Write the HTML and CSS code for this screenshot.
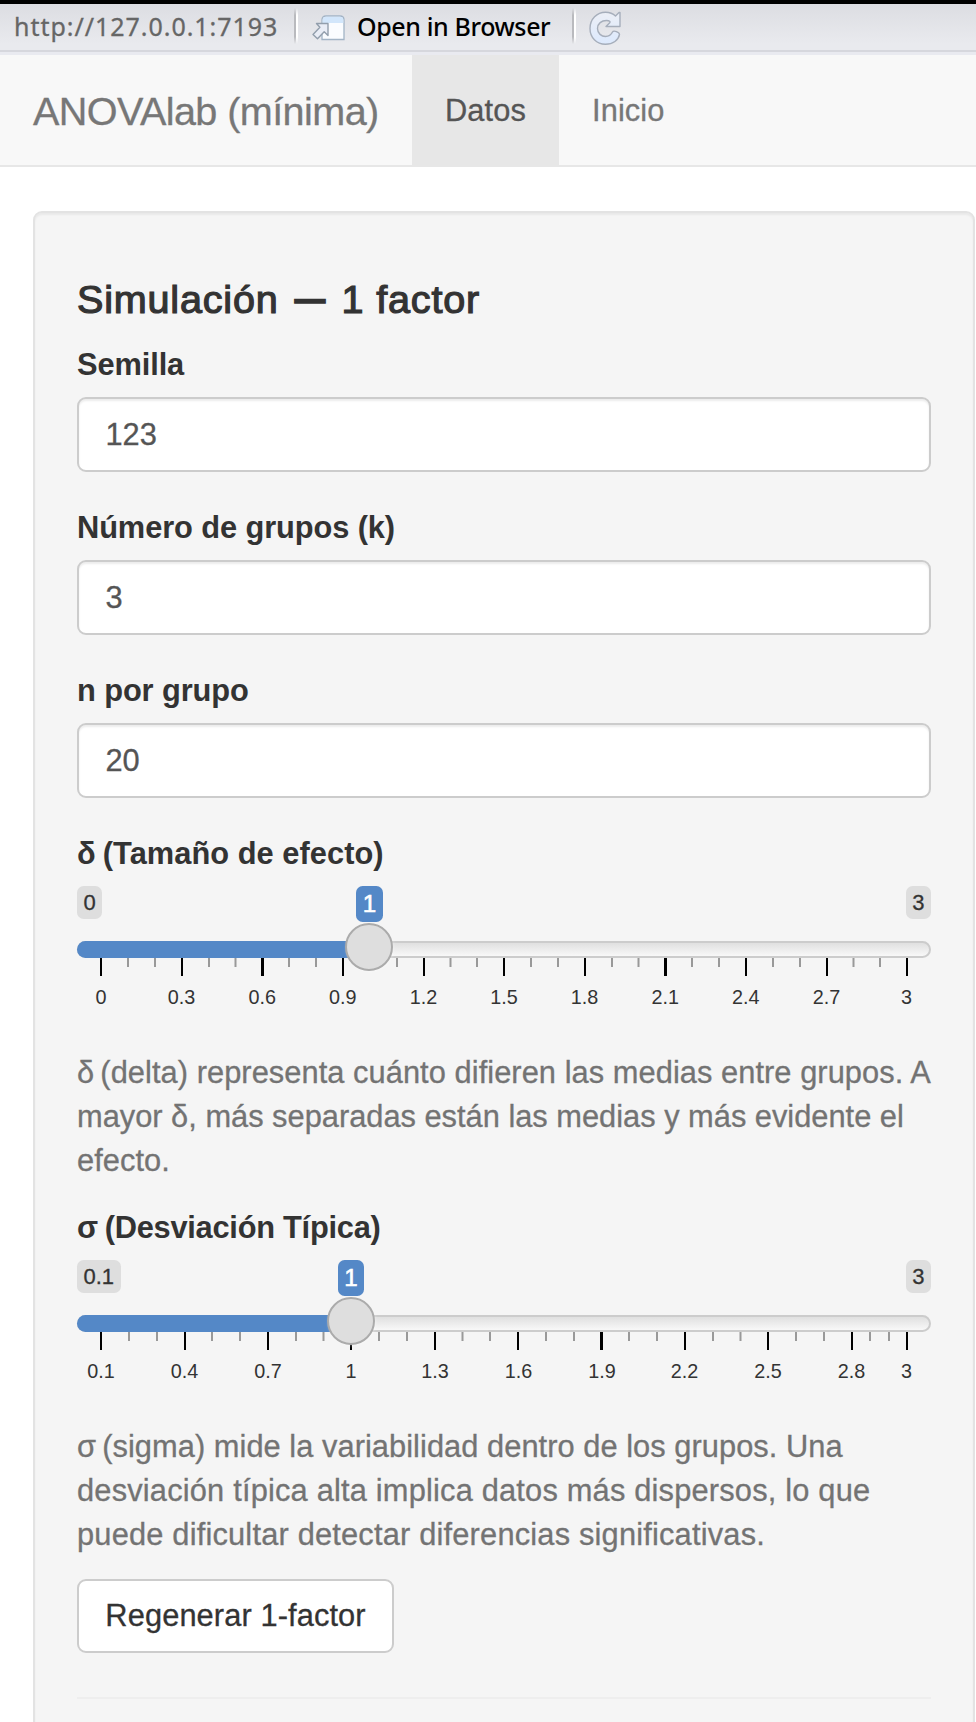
FILE: index.html
```html
<!DOCTYPE html>
<html lang="es">
<head>
<meta charset="utf-8">
<title>ANOVAlab (mínima)</title>
<link rel="stylesheet" href="styles.css">
</head>
<body>
<header class="toolbar">
  <span class="url">http://127.0.0.1:7193</span>
  <span class="sep"></span>
  <svg class="open-icon" width="36" height="28" viewBox="0 0 36 28">
    <path d="M11 25.500V6q0-4 4-4h14q4 0 4 4v19.500z" fill="#fafcff" stroke="#a3b4c6" stroke-width="1.300"/>
    <path d="M11.700 9V6q0-3.300 3.300-3.300h14q3.300 0 3.300 3.300v3z" fill="#d2e6fb"/>
    <path d="M5.500 9.500H17V21.500L13.200 17.800L6.500 24.700L2 20.500L8.900 13.300z" fill="#e9edf6" stroke="#929eac" stroke-width="1.400" stroke-linejoin="round"/>
  </svg>
  <span class="open">Open in Browser</span>
  <span class="sep"></span>
  <svg class="reload-icon" width="34" height="36" viewBox="0 0 34 36">
    <defs><linearGradient id="rl" x1="0" y1="0" x2="0" y2="1"><stop offset="0" stop-color="#eceff6"/><stop offset="1" stop-color="#dce9fd"/></linearGradient></defs>
    <path d="M32 2.500V16.500H18L21.500 13C22.800 11.500 21.500 10.500 18.500 10.500C13.500 10.500 9.500 13.500 9.500 18.500C9.500 23.500 13.500 26.500 17.500 26.500C21 26.500 23 25 24.500 22C25.500 20 31.500 22 31.500 24.500C30.500 30 25 34.300 17.500 34.300C8.500 34.300 2 27.500 2 18.500C2 9 9 2.300 17.500 2.300C22 2.300 25 3.500 27.500 6L31 2.500z" fill="url(#rl)" stroke="#a6aebb" stroke-width="1.400" stroke-linejoin="round"/>
  </svg>
</header>
<nav class="navbar">
  <span class="brand">ANOVAlab (mínima)</span>
  <a class="tab active">Datos</a>
  <a class="tab">Inicio</a>
</nav>
<main class="well">
  <h4 class="title">Simulación <span class="dash">—</span> 1 factor</h4>
  <label class="label">Semilla</label>
  <div class="field">123</div>
  <label class="label">Número de grupos (k)</label>
  <div class="field">3</div>
  <label class="label">n por grupo</label>
  <div class="field">20</div>
  <label class="label delta"><span class="greek-b">δ</span> (Tamaño de efecto)</label>
  <div class="slider">
    <div class="track"><div class="fill" style="width:280px"></div></div>
    <span class="limit">0</span>
    <span class="limit max">3</span>
    <span class="value" style="left:279px;width:27px">1</span>
    <svg class="scale" width="854" height="60" viewBox="0 0 854 60">
      <path class="minor" d="M51 0v9M78 0v9M132 0v9M158.500 0v9M212 0v9M239 0v9M320 0v9M373.500 0v9M400 0v9M454 0v9M481 0v9M535 0v9M561.500 0v9M615 0v9M642 0v9M696 0v9M723 0v9M776.500 0v9M803 0v9"/>
      <path class="major" d="M24 0v18M105 0v18M266 0v18M347 0v18M427 0v18M508 0v18M669 0v18M750 0v18M830 0v18"/>
      <path class="major wide" d="M185.500 0v18M588.500 0v18"/>
      <g class="nums"><text x="24" y="46">0</text><text x="104.600" y="46">0.3</text><text x="185.200" y="46">0.6</text><text x="265.800" y="46">0.9</text><text x="346.400" y="46">1.2</text><text x="427" y="46">1.5</text><text x="507.600" y="46">1.8</text><text x="588.200" y="46">2.1</text><text x="668.800" y="46">2.4</text><text x="749.400" y="46">2.7</text><text x="829.500" y="46">3</text></g>
    </svg>
    <span class="handle" style="left:268px"></span>
  </div>
  <p class="help"><span class="greek">δ</span> (delta) representa cuánto difieren las medias entre grupos. A<br><span class="second">mayor δ, más separadas están las medias y más evidente el</span><br>efecto.</p>
  <label class="label sigma"><span class="greek-b">σ</span> (Desviación Típica)</label>
  <div class="slider">
    <div class="track"><div class="fill" style="width:262px"></div></div>
    <span class="limit">0.1</span>
    <span class="limit max">3</span>
    <span class="value" style="left:261px;width:26px">1</span>
    <svg class="scale" width="854" height="60" viewBox="0 0 854 60">
      <path class="minor" d="M52 0v9M80 0v9M135 0v9M163 0v9M219 0v9M246.500 0v9M302 0v9M330 0v9M385.500 0v9M413 0v9M469 0v9M497 0v9M552 0v9M580 0v9M636 0v9M663.500 0v9M719 0v9M747 0v9M793 0v9M812 0v9"/>
      <path class="major" d="M24 0v18M108 0v18M191 0v18M274 0v18M358 0v18M441 0v18M608 0v18M691 0v18M775 0v18M830 0v18"/>
      <path class="major wide" d="M524.500 0v18"/>
      <g class="nums"><text x="24" y="46">0.1</text><text x="107.600" y="46">0.4</text><text x="191" y="46">0.7</text><text x="274" y="46">1</text><text x="358" y="46">1.3</text><text x="441.500" y="46">1.6</text><text x="525" y="46">1.9</text><text x="607.600" y="46">2.2</text><text x="691" y="46">2.5</text><text x="774.500" y="46">2.8</text><text x="829.500" y="46">3</text></g>
    </svg>
    <span class="handle" style="left:250px"></span>
  </div>
  <p class="help"><span class="greek">σ</span><span class="first"> (sigma) mide la variabilidad dentro de los grupos. Una</span><br><span class="loose">desviación típica alta implica datos más dispersos, lo que<br>puede dificultar detectar diferencias significativas.</span></p>
  <button class="btn">Regenerar 1-factor</button>
  <hr class="rule">
</main>
</body>
</html>
```
FILE: styles.css
```css
* { box-sizing: border-box; }
html, body { margin: 0; height: 1722px; overflow: hidden; }
body { background: #fff; color: #333; font: 30.8px/44px "Liberation Sans", Arial, sans-serif; width: 976px; -webkit-text-stroke: .3px currentColor; }
.toolbar { height: 55px; border-top: 4px solid #000; background: linear-gradient(#dcdde2 0, #e9eaee 40px, #e9eaee 46px, #d6d7dd 46px, #d6d7dd 48px, #e9eaf0 48px); display: flex; padding-left: 14px; font: 25px/45px "Noto Sans", sans-serif; color: #666; white-space: nowrap; }
.url { width: 280px; letter-spacing: .97px; }
.sep { width: 4px; height: 36px; margin-top: 4px; background: linear-gradient(90deg, #b9babe 50%, #fff 50%); -webkit-mask-image: linear-gradient(transparent, #000 20%, #000 80%, transparent); mask-image: linear-gradient(transparent, #000 20%, #000 80%, transparent); }
.open-icon { margin: 10px 0 0 13px; }
.open { width: 215px; margin-left: 10px; color: #000; font-weight: 500; letter-spacing: -.38px; -webkit-text-stroke: 0; }
.reload-icon { margin: 6px 0 0 12px; }
.navbar { height: 112px; background: #f8f8f8; border-bottom: 2px solid #e7e7e7; display: flex; line-height: 110px; color: #777; }
.brand { width: 412px; padding: 1px 0 0 33px; font-size: 39.6px; letter-spacing: -.58px; white-space: nowrap; }
.tab { padding: 0 33px; line-height: 111px; letter-spacing: .1px; }
.tab.active { width: 147px; height: 112px; background: #e7e7e7; color: #555; }
.well { margin: 44px 0 0 33px; width: 942px; height: 1560px; padding: 64px 42px 0; border: 2px solid #e3e3e3; border-radius: 9px; background: #f5f5f5; box-shadow: inset 0 2px 2px rgba(0,0,0,.05); display: flex; flex-direction: column; align-items: stretch; }
.title { margin: 0; height: 65px; font-size: 39.6px; line-height: 44px; font-weight: 400; letter-spacing: .8px; -webkit-text-stroke: 1.2px #333; white-space: nowrap; }
.dash { display: inline-block; margin-right: -1px; transform: translateY(-3px) scale(.78, 1.3); }
.label { font-weight: 700; height: 55px; padding-top: 1px; letter-spacing: -.1px; -webkit-text-stroke: 0; white-space: nowrap; }
.label.delta { letter-spacing: .04px; }
.label.sigma { letter-spacing: -.25px; }
.greek-b { margin-right: -1.5px; }
.field { height: 75px; margin-bottom: 33px; padding-left: 26.4px; line-height: 71px; background: #fff; border: 2px solid #ccc; border-radius: 9px; color: #555; box-shadow: inset 0 2px 2px rgba(0,0,0,.075); }
.slider { position: relative; height: 164px; padding-top: 55px; }
.track { height: 17px; border: 2px solid #ccc; border-radius: 9px; background: linear-gradient(#e0e0e0, #f8f8f8); }
.fill { height: 17px; margin: -2px 0 0 -2px; background: #5488c7; border-radius: 9px 0 0 9px; }
.limit { position: absolute; left: 0; top: 0; height: 33px; padding: 0 6.5px; font-size: 22px; line-height: 33px; background: #dedede; border-radius: 6.6px; }
.limit.max { left: auto; right: 0; }
.value { position: absolute; top: 0; height: 36px; font-size: 24.2px; line-height: 36px; text-align: center; color: #fff; background: #5488c7; border-radius: 6.6px; -webkit-text-stroke: .6px #fff; }
.handle { position: absolute; top: 37px; width: 48px; height: 48px; border: 2px solid #ababab; border-radius: 50%; background: #dedede; box-shadow: 1px 1px 3px rgba(255,255,255,.3); }
.scale { display: block; }
.minor { stroke: #999; stroke-width: 2; }
.major { stroke: #000; stroke-width: 2; }
.major.wide { stroke-width: 3; }
.nums { font-size: 19.8px; fill: #333; text-anchor: middle; -webkit-text-stroke: 0; }
.help { margin: 0; height: 155px; padding-top: 1px; color: #737373; white-space: nowrap; letter-spacing: .06px; }
.greek { margin-right: -2.5px; }
.second { letter-spacing: 0; }
.first { letter-spacing: .05px; }
.loose { letter-spacing: .19px; }
.btn { align-self: flex-start; width: 317px; height: 74px; padding: 0; flex: none; font: 30.8px/70px "Liberation Sans", Arial, sans-serif; letter-spacing: .1px; color: #333; background: #fff; border: 2px solid #ccc; border-radius: 9px; white-space: nowrap; }
.rule { width: 100%; margin: 44px 0 0; border: 0; border-top: 2px solid #eee; }
```
